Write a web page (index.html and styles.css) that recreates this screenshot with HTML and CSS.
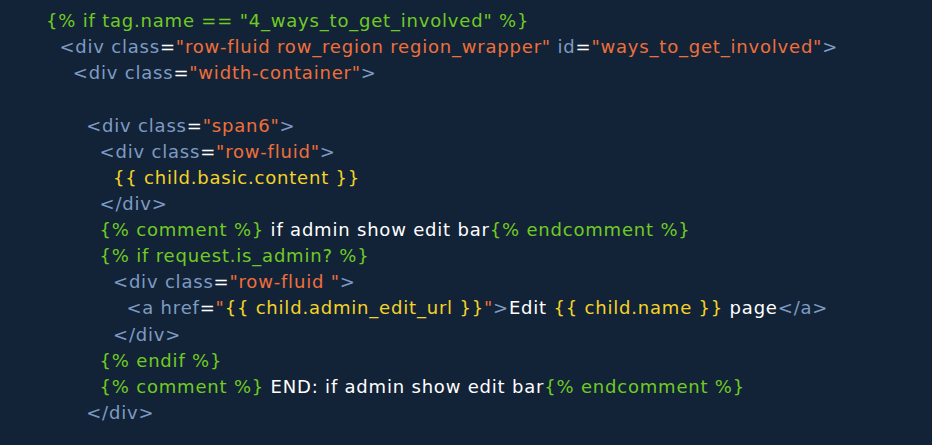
FILE: index.html
```html
<!DOCTYPE html>
<html>
<head>
<meta charset="utf-8">
<link rel="stylesheet" href="styles.css">
</head>
<body>
<div class="code">
<div class="ln i0"><span class="tpl">{% if tag.name == "4_ways_to_get_involved" %}</span></div>
<div class="ln i1"><span class="tag">&lt;div class</span><span class="eq">=</span><span class="str">"row-fluid row_region region_wrapper"</span><span class="tag"> id</span><span class="eq">=</span><span class="str">"ways_to_get_involved"</span><span class="tag">&gt;</span></div>
<div class="ln i2"><span class="tag">&lt;div class</span><span class="eq">=</span><span class="str">"width-container"</span><span class="tag">&gt;</span></div>
<div class="ln i2"> </div>
<div class="ln i3"><span class="tag">&lt;div class</span><span class="eq">=</span><span class="str">"span6"</span><span class="tag">&gt;</span></div>
<div class="ln i4"><span class="tag">&lt;div class</span><span class="eq">=</span><span class="str">"row-fluid"</span><span class="tag">&gt;</span></div>
<div class="ln i5"><span class="var">{{ child.basic.content }}</span></div>
<div class="ln i4"><span class="tag">&lt;/div&gt;</span></div>
<div class="ln i4"><span class="tpl">{% comment %}</span><span class="txt"> if admin show edit bar</span><span class="tpl">{% endcomment %}</span></div>
<div class="ln i4"><span class="tpl">{% if request.is_admin? %}</span></div>
<div class="ln i5"><span class="tag">&lt;div class</span><span class="eq">=</span><span class="str">"row-fluid "</span><span class="tag">&gt;</span></div>
<div class="ln i6"><span class="tag">&lt;a href</span><span class="eq">=</span><span class="str">"</span><span class="var">{{ child.admin_edit_url }}</span><span class="str">"</span><span class="tag">&gt;</span><span class="txt">Edit </span><span class="var">{{ child.name }}</span><span class="txt"> page</span><span class="tag">&lt;/a&gt;</span></div>
<div class="ln i5"><span class="tag">&lt;/div&gt;</span></div>
<div class="ln i4"><span class="tpl">{% endif %}</span></div>
<div class="ln i4"><span class="tpl">{% comment %}</span><span class="txt"> END: if admin show edit bar</span><span class="tpl">{% endcomment %}</span></div>
<div class="ln i3"><span class="tag">&lt;/div&gt;</span></div>
</div>
</body>
</html>
```
FILE: styles.css
```css
html, body {
  margin: 0;
  padding: 0;
  background: #132337;
}
.code {
  font-family: "DejaVu Sans", Verdana, sans-serif;
  font-size: 18px;
  letter-spacing: 0.8px;
  line-height: 26.13px;
  padding: 8px 0 0 46px;
  color: #ffffff;
}
.ln {
  height: 26.13px;
  white-space: pre;
}
.i1 { padding-left: 13.4px; }
.i2 { padding-left: 26.8px; }
.i3 { padding-left: 40.2px; }
.i4 { padding-left: 53.6px; }
.i5 { padding-left: 67px; }
.i6 { padding-left: 80.4px; }
.tpl { color: #6fcb23; }
.tag { color: #7e9bc3; }
.eq { color: #ffffff; }
.str { color: #ef6f3a; }
.var { color: #f5d327; }
.txt { color: #ffffff; }
```
